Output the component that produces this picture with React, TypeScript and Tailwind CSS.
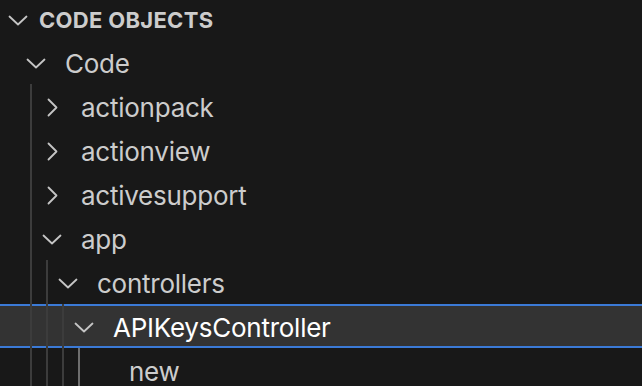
import React from "react";

type Node = {
  label: string;
  level: number;
  kind: "open" | "closed" | "leaf";
  selected?: boolean;
  activeGuide?: number;
};

const rows: Node[] = [
  { label: "Code", level: 1, kind: "open" },
  { label: "actionpack", level: 2, kind: "closed" },
  { label: "actionview", level: 2, kind: "closed" },
  { label: "activesupport", level: 2, kind: "closed" },
  { label: "app", level: 2, kind: "open" },
  { label: "controllers", level: 3, kind: "open" },
  { label: "APIKeysController", level: 4, kind: "open", selected: true },
  { label: "new", level: 5, kind: "leaf", activeGuide: 3 },
];

function ChevronDown() {
  return (
    <svg width="20" height="11" viewBox="0 0 20 11" fill="none">
      <polyline points="1.5,1.5 10,9.5 18.5,1.5" stroke="#c5c5c5" strokeWidth="1.8" strokeLinecap="round" strokeLinejoin="round" />
    </svg>
  );
}

function ChevronRight() {
  return (
    <svg width="11" height="19" viewBox="0 0 11 19" fill="none">
      <polyline points="1.5,1.5 9.5,9.5 1.5,17.5" stroke="#c5c5c5" strokeWidth="1.8" strokeLinecap="round" strokeLinejoin="round" />
    </svg>
  );
}

function Row({ node }: { node: Node }) {
  const guides = Array.from({ length: node.level - 1 });
  return (
    <div
      className={`flex h-[44px] items-stretch pl-[22px] ${
        node.selected ? "border-y-2 border-[#3b7ad6] bg-[#333333] text-white" : "text-[#cccccc]"
      }`}
    >
      {guides.map((_, i) => (
        <span key={i} className="relative w-[16px] shrink-0">
          <span
            className={`absolute ${node.selected ? "-top-[2px] -bottom-[2px]" : "top-0 bottom-0"} left-[8px] w-[2px] ${
              node.activeGuide === i ? "bg-[#6e6e6e]" : "bg-[#3c3c3c]"
            }`}
          />
        </span>
      ))}
      <span className="flex w-[28px] shrink-0 items-center justify-center pt-[2px]">
        {node.kind === "open" && <ChevronDown />}
        {node.kind === "closed" && <ChevronRight />}
      </span>
      <span className="ml-[15px] flex items-center pt-[4px] text-[26px] leading-none tracking-[-0.25px]">
        {node.label}
      </span>
    </div>
  );
}

export default function App() {
  return (
    <div
      className="h-[386px] w-[642px] overflow-hidden bg-[#181818]"
      style={{ fontFamily: "Inter, 'Noto Sans', sans-serif" }}
    >
      <div className="flex h-[40px] items-center pl-[8px] text-[#cccccc]">
        <ChevronDown />
        <span className="ml-[11px] text-[22px] font-bold leading-none tracking-[0.3px]">CODE OBJECTS</span>
      </div>
      {rows.map((r) => (
        <Row key={r.label} node={r} />
      ))}
    </div>
  );
}
